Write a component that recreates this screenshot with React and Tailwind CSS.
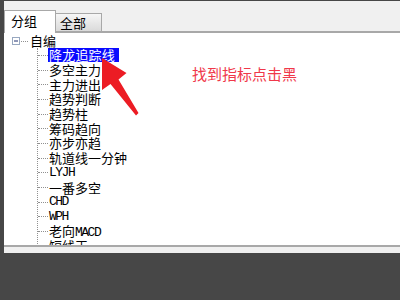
import React from "react";

const cjk = { fontFamily: '"Noto Sans CJK SC", "Noto Sans", sans-serif' };
const mono = { fontFamily: '"Liberation Mono", "DejaVu Sans Mono", monospace' };

const items = [
  { t: "降龙追踪线", sel: true },
  { t: "多空主力" },
  { t: "主力进出" },
  { t: "趋势判断" },
  { t: "趋势柱" },
  { t: "筹码趋向" },
  { t: "亦步亦趋" },
  { t: "轨道线一分钟" },
  { t: "LYJH", latin: true },
  { t: "一番多空" },
  { t: "CHD", latin: true },
  { t: "WPH", latin: true },
  { t: "老向MACD", mix: true },
  { t: "短线王" },
];

function Label({ it }) {
  if (it.latin) {
    return (
      <span className="text-[13px] leading-[14px] tracking-[-1.5px] text-black" style={mono}>
        {it.t}
      </span>
    );
  }
  if (it.mix) {
    return (
      <span className="text-[13px] text-black leading-[14px]" style={cjk}>
        老向
        <span className="text-[13px] tracking-[-1.5px]" style={mono}>
          MACD
        </span>
      </span>
    );
  }
  if (it.sel) {
    return (
      <span
        className="bg-[#0a0aff] text-white text-[13px] leading-[14px] h-[14px] pl-[1px] pr-[4px] -ml-[1px] tracking-[0.2px]"
        style={cjk}
      >
        {it.t}
      </span>
    );
  }
  return (
    <span className="text-[13px] text-black leading-[14px]" style={cjk}>
      {it.t}
    </span>
  );
}

export default function App() {
  return (
    <div className="w-[400px] h-[300px] bg-[#474747] pt-[1px] pl-[4px] overflow-hidden">
      <div className="flex flex-col h-[252px] bg-[#f0f0f0]">
        {/* tab strip */}
        <div className="h-[30px] flex items-end shrink-0">
          <div
            className="relative z-10 w-[52px] h-[23px] -mb-[2px] bg-white border-l border-t border-r border-[#a8a8a8] flex items-start pl-[6px] pt-[1px] text-[13px] leading-[18px] text-black"
            style={cjk}
          >
            分组
          </div>
          <div
            className="w-[46px] h-[18px] border-t border-r border-[#a8a8a8] bg-gradient-to-b from-[#f6f6f6] to-[#dadada] flex items-start pl-[4px] text-[13px] text-black leading-[18px]"
            style={cjk}
          >
            全部
          </div>
        </div>
        {/* content */}
        <div className="relative flex-1 bg-white border-t-2 border-b-2 border-[#a8a8a8] overflow-hidden">
          <div className="pt-[1px]">
            {/* root */}
            <div className="h-[14px] flex items-center">
              <svg width="9" height="9" viewBox="0 0 9 9" className="ml-[8px]">
                <rect x="0.5" y="0.5" width="7" height="7" fill="#ffffff" stroke="#98a8c0" />
                <line x1="2" y1="4" x2="6" y2="4" stroke="#203070" strokeWidth="1" />
              </svg>
              <span className="w-[7px] border-t border-dotted border-[#909090]"></span>
              <span className="ml-[2px] text-[13px] text-black leading-[14px]" style={cjk}>
                自编
              </span>
            </div>
            {/* children */}
            <div className="ml-[33px] border-l border-dotted border-[#909090] pb-[20px]">
              {items.map((it, i) => (
                <div key={i} className="h-[14.7px] flex items-center">
                  <span className="w-[10px] border-t border-dotted border-[#909090]"></span>
                  <span className="ml-[1px] flex items-center">
                    <Label it={it} />
                  </span>
                </div>
              ))}
            </div>
          </div>
          {/* annotation text */}
          <div
            className="absolute left-[188px] top-[31px] text-[15px] leading-[20px] text-[#f0384a]"
            style={cjk}
          >
            找到指标点击黑
          </div>
          {/* arrow */}
          <svg
            className="absolute left-0 top-0"
            width="396"
            height="211"
            viewBox="0 0 396 211"
          >
            <g transform="translate(-4,-33)">
              <polygon
                points="102,58 126.5,73 118.5,79.5 138.5,113 136,115.5 110.5,84 102,90"
                fill="#ec1c24"
              />
            </g>
          </svg>
        </div>
        <div className="h-[6px] bg-[#f0f0f0]"></div>
      </div>
    </div>
  );
}
